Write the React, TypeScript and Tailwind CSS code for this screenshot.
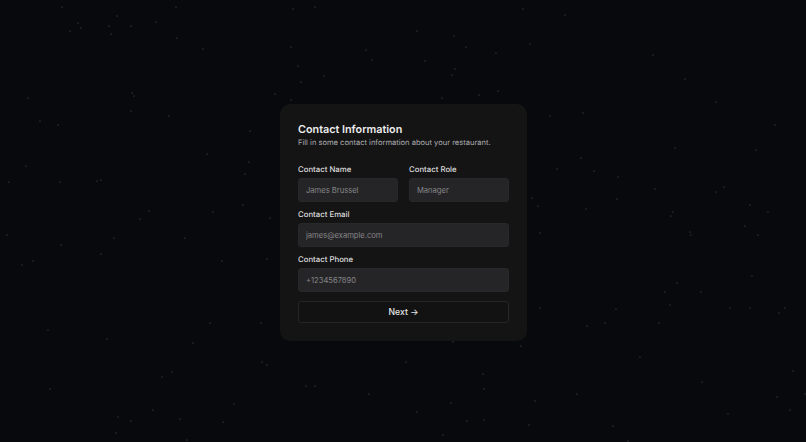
const stars = [
  [62,7],[176,7],[117,16],[78,23],[109,26],[131,26],[156,22],[81,28],[70,31],[111,34],[177,38],[203,49],[132,93],[134,96],[275,94],[28,98],[131,111],[169,116],[40,121],[58,125],[250,131],[207,154],[249,162],[26,166],[245,174],[9,182],[60,182],[97,181],[101,180],[243,205],[149,211],[213,212],[140,219],[270,218],
  [7,235],[114,238],[185,238],[61,245],[101,254],[33,261],[22,265],[222,261],[267,259],[210,323],[261,323],[48,330],[107,339],[193,343],[262,362],[267,365],[172,372],[162,377],[50,389],[234,404],[153,410],[118,417],[131,421],[180,419],[223,422],[116,433],[187,440],
  [565,15],[530,44],[653,55],[685,79],[716,102],[550,116],[583,113],[775,125],[675,148],[756,150],[581,158],[557,169],[594,171],[618,177],[655,189],[724,187],[716,192],[532,198],[617,199],[538,206],[750,205],[586,209],[673,212],[768,212],[671,216],
  [540,233],[690,232],[691,235],[745,226],[758,235],[752,276],[677,283],[665,292],[701,292],[670,305],[540,308],[616,309],[730,308],[750,308],[785,308],[779,313],[587,326],[605,323],[659,323],[640,357],[793,371],[702,382],[577,394],[777,397],[535,401],[805,394],[790,410],[728,414],[529,425],[613,426],[628,441],
  [293,9],[315,7],[523,9],[417,31],[454,36],[466,47],[291,47],[366,50],[496,53],[372,60],[425,61],[298,66],[455,69],[452,75],[324,76],[301,82],[498,91],[479,95],[442,98],[291,100],
  [453,342],[521,346],[406,362],[483,374],[306,386],[315,386],[484,389],[369,394],[451,403],[417,412],[467,421],[484,420],[443,435],
]

const Field = ({ label, placeholder }: { label: string; placeholder: string }) => {
  return (
    <div className="flex-1 min-w-0">
      <label className="block text-[7.8px] leading-[13px] font-medium text-[#dedede] mb-[2px]">{label}</label>
      <input
        placeholder={placeholder}
        className="block w-full h-[24px] px-[7px] rounded-[3px] border border-[#28282a] bg-[#252527] text-[7.6px] outline-none placeholder:text-[#858589]"
      />
    </div>
  )
}

const App = () => {
  return (
    <main className="relative w-full h-screen overflow-hidden bg-[#08090c] pt-[3px] pl-[1px] flex items-center justify-center font-['Inter',sans-serif] [text-rendering:geometricPrecision]">
      <svg className="absolute inset-0 w-full h-full" viewBox="0 0 806 442">
        {stars.map(([x, y], i) => (
          <circle key={i} cx={x} cy={y} r={0.6} fill="#58595c" />
        ))}
      </svg>

      <div className="relative w-[247px] h-[237px] rounded-[10px] bg-[#141415] px-[18px] pt-[19px]">
        <h1 className="text-[10.8px] leading-[14px] font-semibold text-[#ececec]">Contact Information</h1>
        <p className="text-[7.55px] leading-[12px] text-[#ababae]">Fill in some contact information about your restaurant.</p>

        <div className="mt-[14px] flex flex-col gap-[6px]">
          <div className="flex gap-[11px]">
            <Field label="Contact Name" placeholder="James Brussel" />
            <Field label="Contact Role" placeholder="Manager" />
          </div>
          <Field label="Contact Email" placeholder="james@example.com" />
          <Field label="Contact Phone" placeholder="+1234567890" />
        </div>

        <button className="block mt-[9px] w-full h-[22px] pt-[1px] rounded-[3px] border border-[#262628] bg-[#121213] text-[8.7px] font-medium text-[#e8e8e8]">
          Next →
        </button>
      </div>
    </main>
  )
}

export default App
